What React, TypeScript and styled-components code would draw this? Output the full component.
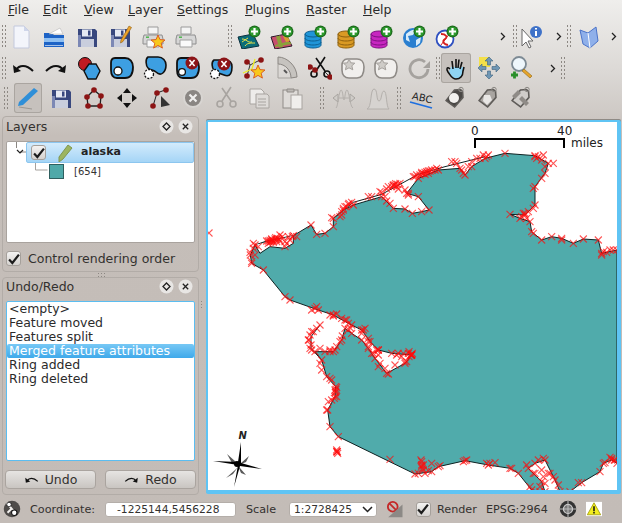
import React from "react";
import styled, { createGlobalStyle } from "styled-components";

const Global = createGlobalStyle`
  html, body { margin: 0; padding: 0; background: #c3bcb7; }
  * { box-sizing: border-box; }
`;

const Page = styled.div`
  width: 622px; height: 523px; overflow: hidden;
  display: flex; flex-direction: column;
  font-family: "DejaVu Sans", sans-serif; font-size: 12px; color: #2b2b2b;
  background: linear-gradient(180deg, #efeeec 0, #dcd9d6 70px, #cfcac6 112px, #c5beb9 135px, #c3bcb7 100%);
`;
const MenuBar = styled.div`height: 20px; display: flex; padding-left: 8px; align-items: center; flex: none;`;
const MenuItem = styled.span<{ $w: number }>`
  width: ${p => p.$w}px; font-size: 12.5px; line-height: 20px;
  u { text-decoration-thickness: 1px; text-underline-offset: 1px; }
`;
const ToolRow = styled.div<{ $h: number }>`height: ${p => p.$h}px; display: flex; align-items: center; flex: none;`;
const Tool = styled.div<{ $w?: number; $active?: boolean; $ml?: number; $mr?: number }>`
  width: ${p => p.$w ?? 33}px; height: 30px; flex: none;
  margin-left: ${p => p.$ml ?? 0}px; margin-right: ${p => p.$mr ?? 0}px;
  display: flex; align-items: center; justify-content: center;
  border-radius: 3px;
  ${p => p.$active ? "background:#c6c1bd; box-shadow: inset 0 0 0 1px #aaa5a0;" : ""}
  svg { display: block; }
`;
const Grip = styled.div<{ $l: number; $r: number; $h?: number }>`
  width: 5px; height: ${p => p.$h ?? 25}px; flex: none;
  margin-left: ${p => p.$l}px; margin-right: ${p => p.$r}px;
  background-image: radial-gradient(circle, #8d8883 0.7px, transparent 0.9px);
  background-size: 3px 4px;
`;
const More = styled.span<{ $l: number; $r?: number }>`
  flex: none; margin-left: ${p => p.$l}px; margin-right: ${p => p.$r ?? 0}px; width: 6px; display: flex;
`;

const Main = styled.div`flex: 1; min-height: 0; display: flex;`;
const Side = styled.div`width: 197px; flex: none; margin: 3px 0 0 2px; display: flex; flex-direction: column;`;
const Dock = styled.section<{ $h: number }>`
  height: ${p => p.$h}px; flex: none;
  border: 1px solid #b2aca7; border-radius: 4px; padding: 0 3px; display: flex; flex-direction: column;
`;
const DockHead = styled.header<{ $h: number }>`
  height: ${p => p.$h}px; flex: none; display: flex; align-items: center; padding: 0 2px 6px 0;
  font-size: 12.5px; color: #33312f;
  span { flex: 1; }
  svg { margin-left: 4px; }
`;
const DockGrip = styled.div`
  height: 5px; flex: none; width: 8px; margin: 0 auto;
  background-image: radial-gradient(circle, #8d8883 0.7px, transparent 0.9px);
  background-size: 3px 3px;
`;
const ListBox = styled.div<{ $h: number; $blue?: boolean }>`
  height: ${p => p.$h}px; flex: none; background: #fff;
  border: 1px solid ${p => p.$blue ? "#5bbdf0" : "#a9a39e"}; border-radius: 2px;
`;
const LayerRow = styled.div`display: flex; align-items: center; height: 21px;`;
const LayerSel = styled.div`
  flex: 1; height: 21px; display: flex; align-items: center; padding-left: 4px;
  background: linear-gradient(180deg, #d3ebfc, #a5d5f6); border: 1px solid #8cc6ef; border-radius: 2px;
  font-weight: bold; font-size: 11px; color: #232323;
  b { margin: 0 0 2px 8px; }
  svg { margin-left: 12px; }
`;
const ChildRow = styled.div`
  display: flex; align-items: center; height: 16px; font-size: 10px; color: #333;
  svg { flex: none; }
`;
const Swatch = styled.div`width: 15px; height: 15px; background: #4fa9a9; border: 1px solid #2f5f5f; margin-right: 10px;`;
const Check = styled.div`
  width: 15px; height: 15px; flex: none; border-radius: 3px; border: 1px solid #a5a09b;
  background: linear-gradient(180deg, #f4f3f2, #d5d2cf); display: flex; align-items: center; justify-content: center;
  svg { margin: 0; }
`;
const CheckRow = styled.label`
  height: 28px; flex: none; display: flex; align-items: center; gap: 7px; padding: 3px 0 0 0;
  font-size: 12.5px; color: #33312f;
`;
const UndoItem = styled.div<{ $sel?: boolean }>`
  height: 14px; line-height: 14px; padding-left: 2px; font-size: 12.5px; color: ${p => p.$sel ? "#fff" : "#2b2b2b"};
  white-space: nowrap;
  ${p => p.$sel ? "background: linear-gradient(180deg,#77c8f5,#3fa9ea); border-radius: 2px;" : ""}
`;
const BtnRow = styled.div`display: flex; justify-content: space-between; padding: 9px 0 0 0; margin: 0 -1px;`;
const Btn = styled.button`
  width: 91px; height: 19px; padding: 0; display: flex; align-items: center; justify-content: center; gap: 6px;
  font: 12.5px "DejaVu Sans", sans-serif; color: #33312f;
  background: linear-gradient(180deg, #e6e4e2, #c9c5c1); border: 1px solid #aaa49f; border-radius: 4px;
`;
const SplitGrip = styled.div`
  width: 3px; height: 9px; flex: none; align-self: flex-start; margin: 187px 3px 0 1px;
  background-image: radial-gradient(circle, #8d8883 0.7px, transparent 0.9px);
  background-size: 3px 3px;
`;
const MapFrame = styled.div`
  flex: none; width: 415px; height: 374px; margin-top: 7px;
  border-style: solid; border-color: #5fc4f4; border-width: 2px 4px 4px 2px; border-radius: 2px; background: #fff;
  box-shadow: 0 -1px 0 #8f8a85; overflow: hidden;
  svg { display: block; }
`;

const Status = styled.footer`
  height: 28px; flex: none; display: flex; align-items: center; font-size: 11.2px; color: #33312f; padding-left: 3px;
`;
const Label = styled.span<{ $l: number; $w: number }>`margin-left: ${p => p.$l}px; width: ${p => p.$w}px; flex: none; white-space: nowrap;`;
const Field = styled.div<{ $w: number; $pl: number }>`
  width: ${p => p.$w}px; height: 15px; background: #fff; border: 1px solid #b4aea9; border-radius: 3px;
  flex: none; display: flex; align-items: center; justify-content: space-between; padding: 0 3px 0 ${p => p.$pl}px; line-height: 13px;
  font-size: 10.7px; white-space: nowrap;
`;
const StatusIcon = styled.div<{ $l: number; $w?: number }>`margin-left: ${p => p.$l}px; width: ${p => p.$w ?? 20}px; flex: none; display: flex; justify-content: center;`;

/* ---------- icons ---------- */
const Ic = ({ children, s = 24 }: { children: React.ReactNode; s?: number }) => (
  <svg width={s} height={s} viewBox="0 0 24 24">{children}</svg>
);
const Plus = () => (
  <g>
    <circle cx="17.5" cy="6.5" r="6" fill="#1d6b1d" />
    <circle cx="17.5" cy="6.5" r="4.8" fill="#2e9a2e" />
    <path d="M17.5 3v7M14 6.5h7" stroke="#fff" strokeWidth="2.2" />
  </g>
);
const Floppy = () => (
  <g>
    <path d="M3 4h17l2 2v16H3z" fill="#39487e" />
    <rect x="7" y="4.5" width="10" height="7" fill="#e6e9f2" />
    <rect x="13" y="5.5" width="2.5" height="5" fill="#39487e" />
    <rect x="6" y="14" width="13" height="8" fill="#c9cedd" />
    <rect x="3" y="10" width="3" height="12" fill="#7c88b5" />
  </g>
);
const Printer = () => (
  <g>
    <path d="M7 2h10v7H7z" fill="#f4f4f4" stroke="#9a9a9a" />
    <path d="M3 10h18l1 4v5H2v-5z" fill="#d6d6d6" stroke="#8e8e8e" />
    <rect x="5" y="11.5" width="3" height="1.4" fill="#46b346" />
    <path d="M6 15h12v7H6z" fill="#fafafa" stroke="#a0a0a0" />
  </g>
);
const Star = ({ x = 0, y = 0, k = 1 }: { x?: number; y?: number; k?: number }) => (
  <path transform={`translate(${x} ${y}) scale(${k})`} d="M7 0l2 4.6 5 .4-3.8 3.2 1.2 4.9L7 10.4l-4.4 2.7 1.2-4.9L0 5l5-.4z" fill="#f8c81c" stroke="#d8541c" strokeWidth=".9" />
);
const Cyl = ({ c, d }: { c: string; d: string }) => (
  <g>
    <path d="M2 9v11c0 2 4 3 8 3s8-1 8-3V9z" fill={c} stroke={d} />
    <ellipse cx="10" cy="9" rx="8" ry="3" fill={c} stroke={d} />
    <path d="M2 13c0 2 4 3 8 3s8-1 8-3M2 17c0 2 4 3 8 3s8-1 8-3" fill="none" stroke={d} />
  </g>
);
const Globe = () => (
  <g>
    <circle cx="11" cy="13" r="10" fill="#2a7fd0" />
    <path d="M4 9c4-4 8-5 10-4l-3 5-5 1 2 6-4-2zM14 15l5-3-1 6-4 3z" fill="#d8ecfa" />
  </g>
);
const Blob = () => (
  <path d="M5 2h10c5 0 8 4 8 9s-1 11-8 11H7c-4 0-6-3-6-8V7c0-3 1-5 4-5z" fill="#3d9fe2" stroke="#111" strokeWidth="1.8" />
);
const Dot = ({ x, y, r = 3.6, dash }: { x: number; y: number; r?: number; dash?: boolean }) => (
  <circle cx={x} cy={y} r={r} fill="#fff" stroke="#111" strokeWidth="1.3" strokeDasharray={dash ? "2 1.3" : undefined} />
);
const Vx = ({ x, y, r = 2.8 }: { x: number; y: number; r?: number }) => <circle cx={x} cy={y} r={r} fill="#8c1414" />;
const RedX = ({ x = 15, y = 7 }: { x?: number; y?: number }) => (
  <g>
    <circle cx={x} cy={y} r="6.5" fill="#8c1418" />
    <path d={`M${x - 2.6} ${y - 3}l5.2 6M${x + 2.6} ${y - 3}l-5.2 6`} stroke="#fff" strokeWidth="1.6" />
  </g>
);
const Arrow = ({ flip, s = 24 }: { flip?: boolean; s?: number }) => (
  <svg width={s} height={s} viewBox="0 0 24 24">
    <g transform={flip ? "translate(24 0) scale(-1 1)" : undefined}>
      <path d="M5 14c3-5 10-6 17 1" fill="none" stroke="#111" strokeWidth="2" />
      <path d="M2 9l1 8 7-2z" fill="#111" />
    </g>
  </svg>
);
const GreyBlob = () => (
  <Ic>
    <path d="M6 3h10c4 0 7 3 7 8s-1 11-7 11H8c-4 0-7-3-7-8V9c0-3 2-6 5-6z" fill="#f1efed" stroke="#8f8b87" strokeWidth="1.6" />
    <path d="M8 3l1.8 3.8 4 .4-3 2.6 1 4L8 11.8l-3.6 2 1-4-3-2.6 4-.4z" fill="#cfccc8" stroke="#a5a19d" />
  </Ic>
);
const Scissors = ({ c }: { c: string }) => (
  <g fill="none" stroke={c} strokeWidth="1.6">
    <path d="M17 1L8 15M8 2l9 13" />
    <circle cx="6" cy="18" r="3" />
    <circle cx="19" cy="18" r="3" />
  </g>
);
const Tag = ({ c = "#c8c5c2", inner }: { c?: string; inner?: React.ReactNode }) => (
  <Ic>
    <path d="M4 14L13 4h6l2 2v6l-9 9z" fill={c} stroke="#5f5c59" strokeWidth="1.6" transform="rotate(-4 12 12)" />
    <circle cx="19" cy="3.5" r="2.2" fill="none" stroke="#8a8783" />
    {inner}
  </Ic>
);
const Chev = () => (
  <svg width="6" height="9" viewBox="0 0 6 9"><path d="M1 1l3.5 3.5L1 8" fill="none" stroke="#222" strokeWidth="1.3" /></svg>
);
const Tick = () => (
  <svg width="12" height="12" viewBox="0 0 11 11"><path d="M1 6l3 3.2L10 1.5" fill="none" stroke="#1c1c1c" strokeWidth="2" /></svg>
);
const FloatIc = () => (
  <svg width="15" height="15" viewBox="0 0 15 15">
    <circle cx="7.5" cy="7.5" r="7" fill="#e8e6e4" />
    <path d="M7.5 4l3.5 3.5-3.5 3.5L4 7.5z" fill="none" stroke="#222" strokeWidth="1.3" />
  </svg>
);
const CloseIc = () => (
  <svg width="15" height="15" viewBox="0 0 15 15">
    <circle cx="7.5" cy="7.5" r="7" fill="#e8e6e4" />
    <path d="M4.8 4.8l5.4 5.4M10.2 4.8l-5.4 5.4" stroke="#222" strokeWidth="1.3" />
  </svg>
);

/* ---------- map data (sampled from the picture, at 3x) ---------- */
const z6 = ([x, y]: number[]) => `${205 + x / 3},${115 + y / 3}`;
const z7 = ([x, y]: number[]) => `${205 + x / 3},${300 + y / 3}`;
const north = [[240, 545], [175, 465], [140, 445], [136, 420], [150, 390], [185, 378], [265, 362], [318, 330], [335, 358], [360, 355], [385, 335], [385, 310], [415, 285], [445, 270], [530, 245], [565, 280], [600, 282], [622, 295], [650, 290], [672, 285], [640, 245], [605, 235], [640, 190], [700, 165], [765, 160], [780, 180], [800, 155], [840, 130], [900, 115], [990, 122], [1030, 145], [1020, 175], [990, 215], [990, 270], [960, 300], [915, 298], [945, 310], [975, 320], [980, 350], [1010, 375], [1040, 365], [1070, 370], [1105, 385], [1135, 372], [1180, 375], [1190, 415], [1236, 405]];
const south = [[1236, 490], [1220, 480], [1195, 490], [1185, 515], [1130, 548], [1095, 575], [1065, 575], [1050, 540], [1020, 480], [990, 490], [970, 505], [1010, 545], [1020, 575], [980, 570], [940, 520], [915, 505], [850, 495], [780, 482], [700, 500], [680, 515], [630, 522], [400, 410], [375, 380], [368, 330], [390, 290], [392, 260], [365, 230], [350, 180], [330, 155], [385, 155], [410, 120], [420, 85], [440, 100], [470, 120], [490, 145], [510, 175], [545, 220], [600, 190], [620, 165], [560, 160], [520, 150], [495, 125], [470, 90], [430, 70], [385, 45], [340, 30], [255, 0]];
const land = [...north.map(z6), ...south.map(z7)].join(" ");
const bayLine = [[345, 75], [318, 110], [318, 145], [350, 180]].map(z7).join(" ");
const topSliver = [[385, 310], [445, 262], [530, 238], [640, 178], [720, 155], [840, 125]].map(z6).join(" ");
const westSliver = [[150, 390], [165, 415], [195, 395], [240, 400], [265, 385], [265, 362]].map(z6).join(" ");
const extra6 = [[145, 400], [135, 412], [160, 395], [190, 378], [200, 375], [210, 372], [218, 370], [225, 378], [232, 365], [245, 385], [250, 365], [262, 365], [275, 365], [195, 382], [205, 382], [240, 395], [405, 305], [410, 290], [420, 275], [430, 268], [440, 262], [490, 245], [530, 232], [545, 222], [560, 215], [570, 210], [578, 208], [585, 205], [545, 258], [610, 240], [630, 185], [645, 180], [655, 175], [665, 170], [675, 168], [690, 165], [750, 140], [790, 155], [825, 130], [845, 125], [1000, 125], [1010, 135], [1045, 145], [1010, 190], [955, 295], [965, 310], [1195, 410], [1205, 412], [1225, 405],
  [410, 300], [380, 308], [415, 280], [432, 265], [425, 275], [500, 245], [525, 230], [565, 210], [575, 215], [580, 222], [550, 215], [555, 265], [540, 245], [600, 225], [610, 235], [625, 185], [635, 180], [650, 172], [660, 178], [670, 175], [680, 165], [695, 160], [740, 140], [755, 145], [775, 175], [770, 165], [800, 140], [815, 130], [835, 120], [850, 120], [995, 130], [1015, 120], [990, 125], [1020, 155], [985, 220], [985, 280], [970, 290], [950, 305], [960, 295], [985, 355], [1070, 375], [1190, 420], [1215, 405], [190, 385], [200, 372], [215, 380], [225, 360], [240, 380], [255, 375], [140, 440], [145, 385], [150, 420],
  [195, 376], [205, 378], [215, 374], [222, 372], [198, 380], [212, 368], [565, 212], [572, 206], [650, 176], [660, 172], [670, 168]];
const extra7 = [[330, 25], [385, 48], [420, 60], [440, 75], [475, 90], [490, 115], [505, 160], [520, 150], [575, 165], [590, 170], [610, 160], [620, 165], [618, 165], [605, 185], [520, 200], [395, 450], [398, 460], [395, 455], [395, 262], [392, 275], [395, 290], [380, 300], [375, 235], [345, 190], [320, 95], [310, 120], [315, 145], [375, 150], [390, 150], [650, 485], [650, 500], [655, 510], [640, 520], [660, 520], [670, 512], [785, 480], [775, 485], [855, 490], [1000, 480], [1015, 475], [990, 520], [1015, 530], [1035, 520], [1020, 550], [1005, 560], [1060, 555], [1220, 475], [1228, 480],
  [320, 30], [335, 20], [375, 45], [395, 42], [410, 55], [425, 60], [345, 75], [335, 85], [325, 95], [315, 105], [312, 120], [318, 135], [320, 150], [345, 145], [360, 155], [375, 155], [395, 140], [405, 125], [412, 108], [430, 88], [437, 85], [470, 100], [480, 85], [490, 125], [490, 140], [500, 160], [515, 150], [520, 165], [525, 190], [540, 205], [550, 222], [570, 195], [580, 160], [595, 160], [600, 185], [612, 155], [622, 160], [612, 170], [350, 210], [380, 240], [390, 270], [388, 295], [370, 305], [365, 330], [555, 478], [648, 480], [655, 495], [680, 490], [705, 497], [845, 490], [870, 488], [920, 505], [965, 495], [985, 520], [1010, 510], [1030, 520], [1045, 530], [1120, 548], [1200, 488], [1215, 472], [1230, 480], [975, 560], [1005, 575],
  [619, 164], [618, 166], [620, 163], [397, 455], [396, 456], [393, 268], [391, 278], [652, 505], [650, 495]];
const crossAt = ([x, y]: number[]) => `M${x - 3.5} ${y - 3.5}l7 7M${x + 3.5} ${y - 3.5}l-7 7`;
const pts6 = [...north, ...extra6].map(p => crossAt([205 + p[0] / 3, 115 + p[1] / 3]));
const pts7 = [...south, ...extra7].map(p => crossAt([205 + p[0] / 3, 300 + p[1] / 3]));
const crossPaths = [...pts6, ...pts7, crossAt([209, 233])];

const MapView = () => (
  <svg width="409" height="368" viewBox="208 122 409 368">
    <polygon points={land} fill="#50abab" stroke="#0f2222" strokeWidth="1" strokeLinejoin="round" />
    <polyline points={bayLine} fill="none" stroke="#0f2222" />
    <polyline points={topSliver} fill="none" stroke="#0f2222" />
    <polyline points={westSliver} fill="#fff" stroke="#0f2222" />
    <g stroke="#ff0c0c" strokeOpacity=".7" strokeWidth="1.1" fill="none">
      {crossPaths.map((d, i) => <path key={i} d={d} />)}
    </g>
    <path d="M475 148v-9h89v9" fill="none" stroke="#000" strokeWidth="2" />
    <g fontFamily="'DejaVu Sans', sans-serif" fontSize="12" fill="#222">
      <text x="471" y="135">0</text>
      <text x="557" y="135">40</text>
      <text x="571" y="147">miles</text>
    </g>
    <text x="238.5" y="439" fontFamily="'DejaVu Sans', sans-serif" fontSize="10" fontWeight="bold" fontStyle="italic" fill="#222">N</text>
    <g fill="#000">
      <path d="M241 442l-3 20-25-1 25 4-4 22 6-21 22 3-21-6z" />
      <path d="M227 454l9 8 3 4-7-3zM249 456l-8 7-2 2 7-3zM226 478l9-8 3-3-5 7zM246 475l-6-7-2-2 3 7z" fillOpacity=".65" />
      <circle cx="237" cy="464" r="3" />
    </g>
  </svg>
);

const row1a = [
  <Ic><path d="M5 1h10l5 5v17H5z" fill="#f3f5fb" stroke="#c3c9dd" /><path d="M15 1v5h5z" fill="#cfd6ea" /></Ic>,
  <Ic><path d="M2 8h8l2 2h10v12H2z" fill="#1d63c6" /><path d="M7 9l11-6 3 6z" fill="#fff" stroke="#aaa" strokeWidth=".5" /><path d="M2 13h20v4H2z" fill="#8fc0f2" /><path d="M3 20h18v1H3z" fill="#fff" opacity=".6" /></Ic>,
  <Ic><Floppy /></Ic>,
  <Ic><Floppy /><path d="M13 15L21 1l2.5 1.5L15 16.5l-2.5 1.5z" fill="#eda32a" stroke="#8c5d12" strokeWidth=".6" /></Ic>,
  <Ic><Printer /><Star x={10} y={10} k={1} /></Ic>,
  <Ic><Printer /></Ic>,
];
const row1b = [
  <Ic><path d="M1 12l15-3 6 12-17 3z" fill="#0b6d78" stroke="#0c3140" /><path d="M5 14c5 0 5 4 10 3M8 21c2-3 5-3 10-3M5 17l6-4" stroke="#e7e24a" fill="none" /><Plus /></Ic>,
  <Ic><path d="M1 12l15-3 6 12-17 3z" fill="#c84f6e" stroke="#2c1a2a" /><path d="M6 11.5l3 11 4-.6-3-11.3zM16 17l-11 3 .3 2 16-3-1-2z" fill="#8ba03a" /><path d="M13 11l3 6 4-1-3-6z" fill="#d8a030" /><Plus /></Ic>,
  <Ic><Cyl c="#1f95d8" d="#0d5f92" /><Plus /></Ic>,
  <Ic><Cyl c="#d99a24" d="#8d6010" /><Plus /></Ic>,
  <Ic><Cyl c="#c726c0" d="#7d1080" /><Plus /></Ic>,
  <Ic><Globe /><Plus /></Ic>,
  <Ic><circle cx="10" cy="14" r="8.5" fill="#fff" stroke="#2f50c0" strokeWidth="1.8" /><path d="M6 9c5 0 7 3 4 5s-2 5 3 6" fill="none" stroke="#d61f1f" strokeWidth="1.8" /><path d="M6 20L15 8" stroke="#d61f1f" /><Plus /></Ic>,
];
const row2a = [
  <Arrow />, <Arrow flip />,
  <Ic><circle cx="8" cy="8" r="6.5" fill="#c01a22" stroke="#111" /><path d="M12 8l7 0 4 7-4 8h-8l-4-8z" fill="#3d9fe2" stroke="#111" strokeWidth="1.4" /></Ic>,
  <Ic><Blob /><Dot x={8} y={15} r={4} /></Ic>,
  <Ic><path d="M5 1h10c5 0 8 4 8 8 0 7-5 12-10 7-2-2-6-2-8-4s-3-9 0-11z" fill="#3d9fe2" stroke="#111" strokeWidth="1.6" /><Dot x={6} y={18} r={4.5} dash /></Ic>,
  <Ic><Blob /><Dot x={6} y={16} r={3.4} /><RedX x={16} y={7} /></Ic>,
  <Ic><path d="M5 4h11c5 0 7 3 7 7s-1 11-8 8c-3-1-8-3-10-5s-3-8 0-10z" fill="#3d9fe2" stroke="#111" strokeWidth="1.6" /><Dot x={6} y={18} r={4.5} dash /><RedX x={15} y={8} /></Ic>,
  <Ic><path d="M5 20L8 9l10-5M8 9l-2-4" stroke="#333" fill="none" /><Vx x={5} y={20} /><Vx x={5} y={6} /><Vx x={19} y={4} /><path d="M1 17l9-4 3-10" stroke="#eded22" strokeWidth="1.3" fill="none" /><Star x={9} y={9} k={1} /></Ic>,
  <Ic><path d="M3 1c9 0 19 9 19 20l-6 1C16 14 10 8 3 8z" fill="#c6c3bf" stroke="#8a8682" /><path d="M3 8v14h13" fill="none" stroke="#a5a29e" strokeWidth="1" /><path d="M9 14l3 3" stroke="#555" strokeWidth="2" /></Ic>,
  <Ic><Scissors c="#111" /><path d="M1 10l6 3M17 16l6 6" stroke="#333" /><Vx x={2} y={11} /><Vx x={7} y={14} /><Vx x={22} y={21} /></Ic>,
  <GreyBlob />, <GreyBlob />,
  <Ic><path d="M21 13a9 9 0 1 1-3-7" fill="none" stroke="#a5a29e" strokeWidth="2.8" /><path d="M23 5v7h-7z" fill="#a5a29e" /></Ic>,
];
const row2b = [
  <Ic><path d="M7 11l12 0 0 6-3 5H9l-4-6z" fill="#8fd3f2" /><path d="M12 3v9M8 5l1 8M15 3.5L14 12M18 6l-2 7M6 13c-3-3-4 0-2 3 3 4 4 7 8 7s7-3 7-8l1-4" fill="none" stroke="#111" strokeWidth="1.6" /></Ic>,
  <Ic><rect x="2" y="1" width="11" height="10" fill="#f4e04a" /><path d="M12 1l4 4h-2.5v4h-3V5H8zM12 23l-4-4h2.5v-4h3v4H16zM1 12l4-4v2.5h4v3H5V16zM23 12l-4 4v-2.5h-4v-3h4V8z" fill="#6f97b5" stroke="#3e627e" strokeWidth=".6" /></Ic>,
  <Ic><circle cx="9" cy="8" r="7" fill="#eef6fb" stroke="#7d8a94" strokeWidth="1.8" /><path d="M14 13l8 7-2 2-8-7z" fill="#e6a42a" stroke="#8c6415" strokeWidth=".6" /><path d="M1 19h7M4.5 15.5v7" stroke="#2a8f2a" strokeWidth="2.8" /></Ic>,
];
const row3a = [
  <Ic><path d="M3 16L18 2l4 3L7 19l-5 1z" fill="#2f8fd8" /><path d="M3 21l13 2" stroke="#9b9792" /></Ic>,
  <Ic><Floppy /></Ic>,
  <Ic><path d="M5 11L12 4l7 6-1 10H6z" fill="none" stroke="#222" strokeWidth="1.3" /><Vx x={5} y={11} /><Vx x={12} y={4} /><Vx x={19} y={10} /><Vx x={18} y={20} /><Vx x={6} y={20} /></Ic>,
  <Ic><path d="M12 2l4 5H8zM12 22l-4-5h8zM2 12l5-4v8zM22 12l-5 4V8z" fill="#111" /></Ic>,
  <Ic><path d="M5 20L9 7l8-3" stroke="#222" fill="none" /><Vx x={5} y={20} /><Vx x={9} y={7} /><Vx x={18} y={4} /><path d="M13 10l9 9-9 2z" fill="#333" /></Ic>,
  <Ic><circle cx="12" cy="12" r="9" fill="#8a8683" stroke="#d8d5d2" strokeWidth="2" /><path d="M8.5 8.5l7 7M15.5 8.5l-7 7" stroke="#f0efee" strokeWidth="2.2" /></Ic>,
  <Ic><Scissors c="#a8a4a0" /></Ic>,
  <Ic><path d="M3 3h11l3 3v12H3z" fill="#eeecea" stroke="#a8a4a0" /><path d="M9 8h11l2 2v12H9z" fill="#dedbd8" stroke="#a8a4a0" /><path d="M11 13h8M11 16h8M11 19h8" stroke="#a8a4a0" /></Ic>,
  <Ic><rect x="3" y="4" width="15" height="18" fill="#dedbd8" stroke="#8f8b87" /><path d="M7 3h7v3H7z" fill="#bdb9b5" stroke="#8f8b87" /><rect x="11" y="9" width="11" height="14" fill="#f0eeec" stroke="#a8a4a0" /></Ic>,
  <Ic><path d="M1 12l5-4v8zM23 12l-5 4V8z" fill="#cfccc8" stroke="#a8a4a0" /><path d="M4 22c2-1 3-18 5-18s2 10 3 10 1-10 3-10 3 17 6 18M6 12h12" fill="none" stroke="#b4b0ac" /></Ic>,
  <Ic><path d="M1 23c5-1 3-20 7-20s2 12 5 12 2-10 5-10 2 16 5 18z" fill="#d6d3d0" stroke="#b4b0ac" /></Ic>,
];
const row3b = [
  <Ic><text x="3" y="15" fontFamily="'DejaVu Sans',sans-serif" fontSize="10" fill="#222" transform="rotate(12 12 12)">ABC</text><path d="M1 16l22 6" stroke="#1e6fe0" strokeWidth="1.8" /></Ic>,
  <Tag c="#4a4745" inner={<circle cx="12" cy="12" r="5" fill="#f2f0ee" />} />,
  <Tag c="#a9a5a1" inner={<path d="M9 9h6l2 5-5 5-4-4z" fill="#e8e6e4" />} />,
  <Tag c="#d0cdca" inner={<path d="M4 10l6-6 3 3-6 6zM11 13l7 7 3-3-7-7z" fill="#8f8b87" />} />,
];

export default function App() {
  return (
    <Page>
      <Global />
      <MenuBar>
        {[["F", "ile", 35], ["E", "dit", 41], ["V", "iew", 44], ["L", "ayer", 49], ["S", "ettings", 68], ["P", "lugins", 61], ["R", "aster", 57], ["H", "elp", 30]].map(([a, b, w]) => (
          <MenuItem key={a as string} $w={w as number}><u>{a}</u>{b}</MenuItem>
        ))}
      </MenuBar>
      <ToolRow $h={33}>
        <Grip $l={1} $r={-2} />
        {row1a.map((c, i) => <Tool key={i}>{c}</Tool>)}
        <Grip $l={25} $r={0} />
        {row1b.map((c, i) => <Tool key={i}>{c}</Tool>)}
        <More $l={37}><Chev /></More>
        <Grip $l={6} $r={-3} />
        <Tool><Ic><path d="M3 4v17l4-4 3 6 2-1-3-6h5z" fill="#fff" stroke="#666" /><circle cx="17" cy="7" r="6" fill="#3f72c8" /><path d="M17 6v5M17 3v1.5" stroke="#fff" strokeWidth="2" /></Ic></Tool>
        <More $l={9}><Chev /></More>
        <Grip $l={4} $r={1} />
        <Tool><Ic><path d="M3 5l8 3 8-6 2 14-8 7-7-4z" fill="#8fb0ea" stroke="#4b73c8" /><path d="M11 8l2 15" stroke="#fff" /></Ic></Tool>
        <More $l={6}><Chev /></More>
      </ToolRow>
      <ToolRow $h={30}>
        <Grip $l={1} $r={0} />
        {row2a.map((c, i) => <Tool key={i}>{c}</Tool>)}
        <Grip $l={0} $r={1} />
        <Tool $active $w={30}>{row2b[0]}</Tool>
        <Tool $ml={1}>{row2b[1]}</Tool>
        <Tool>{row2b[2]}</Tool>
        <More $l={12}><Chev /></More>
        <Grip $l={4} $r={0} />
      </ToolRow>
      <ToolRow $h={30}>
        <Grip $l={3} $r={0} />
        <Tool $active $w={28} $ml={6} $mr={2}>{row3a[0]}</Tool>
        {row3a.slice(1, 9).map((c, i) => <Tool key={i}>{c}</Tool>)}
        <Grip $l={11} $r={3} />
        <Tool>{row3a[9]}</Tool>
        <Tool $ml={1}>{row3a[10]}</Tool>
        <Grip $l={2} $r={3} />
        {row3b.map((c, i) => <Tool key={i}>{c}</Tool>)}
      </ToolRow>
      <Main>
        <Side>
          <Dock $h={156}>
            <DockHead $h={24}><span>Layers</span><FloatIc /><CloseIc /></DockHead>
            <ListBox $h={102}>
              <LayerRow>
                <svg width="19" height="21" viewBox="0 0 19 21"><path d="M9.5 0v6M13 10h6" stroke="#8a8682" fill="none" /><path d="M12 9l3 3 3-3" transform="translate(-2 -1)" fill="none" stroke="#222" strokeWidth="1.2" /></svg>
                <LayerSel>
                  <Check><Tick /></Check>
                  <svg width="15" height="18" viewBox="0 0 15 18"><path d="M1 13L10 1l4 3-9 11-4 3z" fill="#9cb560" stroke="#7f9650" /></svg>
                  <b>alaska</b>
                </LayerSel>
              </LayerRow>
              <ChildRow>
                <svg width="42" height="16" viewBox="0 0 42 16"><path d="M28.5 0v7h12" fill="none" stroke="#a5a19d" /></svg>
                <Swatch />
                [654]
              </ChildRow>
            </ListBox>
            <CheckRow><Check><Tick /></Check>Control rendering order</CheckRow>
          </Dock>
          <DockGrip />
          <Dock $h={218}>
            <DockHead $h={23}><span>Undo/Redo</span><FloatIc /><CloseIc /></DockHead>
            <ListBox $h={160} $blue>
              <UndoItem>&lt;empty&gt;</UndoItem>
              <UndoItem>Feature moved</UndoItem>
              <UndoItem>Features split</UndoItem>
              <UndoItem $sel>Merged feature attributes</UndoItem>
              <UndoItem>Ring added</UndoItem>
              <UndoItem>Ring deleted</UndoItem>
            </ListBox>
            <BtnRow>
              <Btn><Arrow s={15} />Undo</Btn>
              <Btn><Arrow s={15} flip />Redo</Btn>
            </BtnRow>
          </Dock>
        </Side>
        <SplitGrip />
        <MapFrame><MapView /></MapFrame>
      </Main>
      <Status>
        <Ic s={18}><circle cx="12" cy="12" r="11" fill="#4f4c4a" /><path d="M5 4l12 14M6 17l5-5" stroke="#f2f0ee" strokeWidth="2.6" /><circle cx="15" cy="17" r="3.6" fill="#fff" stroke="#111" strokeWidth="1.4" /><circle cx="8" cy="6" r="3" fill="#fff" stroke="#111" /></Ic>
        <Label $l={9} $w={75}>Coordinate:</Label>
        <Field $w={131} $pl={11}>-1225144,5456228</Field>
        <Label $l={10} $w={43}>Scale</Label>
        <Field $w={88} $pl={4}>1:2728425<svg width="11" height="7" viewBox="0 0 11 7"><path d="M1 1l4.5 4.5L10 1" fill="none" stroke="#222" strokeWidth="1.5" /></svg></Field>
        <StatusIcon $l={9} $w={18}><Ic s={18}><circle cx="9" cy="9" r="6.5" fill="none" stroke="#c42828" strokeWidth="2.4" /><path d="M4.5 4.5l9 9" stroke="#c42828" strokeWidth="2.4" /><path d="M3 23L22 6v17z" fill="#8c8986" /></Ic></StatusIcon>
        <StatusIcon $l={11} $w={16}><Check><Tick /></Check></StatusIcon>
        <Label $l={6} $w={49}>Render</Label>
        <Label $l={0} $w={72}>EPSG:2964</Label>
        <StatusIcon $l={0} $w={20}><Ic s={18}><circle cx="12" cy="12" r="11" fill="#333" /><circle cx="12" cy="12" r="6" fill="#777" stroke="#ddd" strokeWidth="1.6" /><path d="M12 1v22M1 12h22" stroke="#bbb" strokeWidth="1.4" /></Ic></StatusIcon>
        <StatusIcon $l={8} $w={16}><svg width="16" height="16" viewBox="0 0 18 16"><rect width="18" height="16" fill="#fff" /><path d="M9 1l7.5 13.5h-15z" fill="#f3ee1e" stroke="#a5a010" /><path d="M9 5v5.5M9 11.5v1.6" stroke="#111" strokeWidth="1.7" /></svg></StatusIcon>
      </Status>
    </Page>
  );
}
